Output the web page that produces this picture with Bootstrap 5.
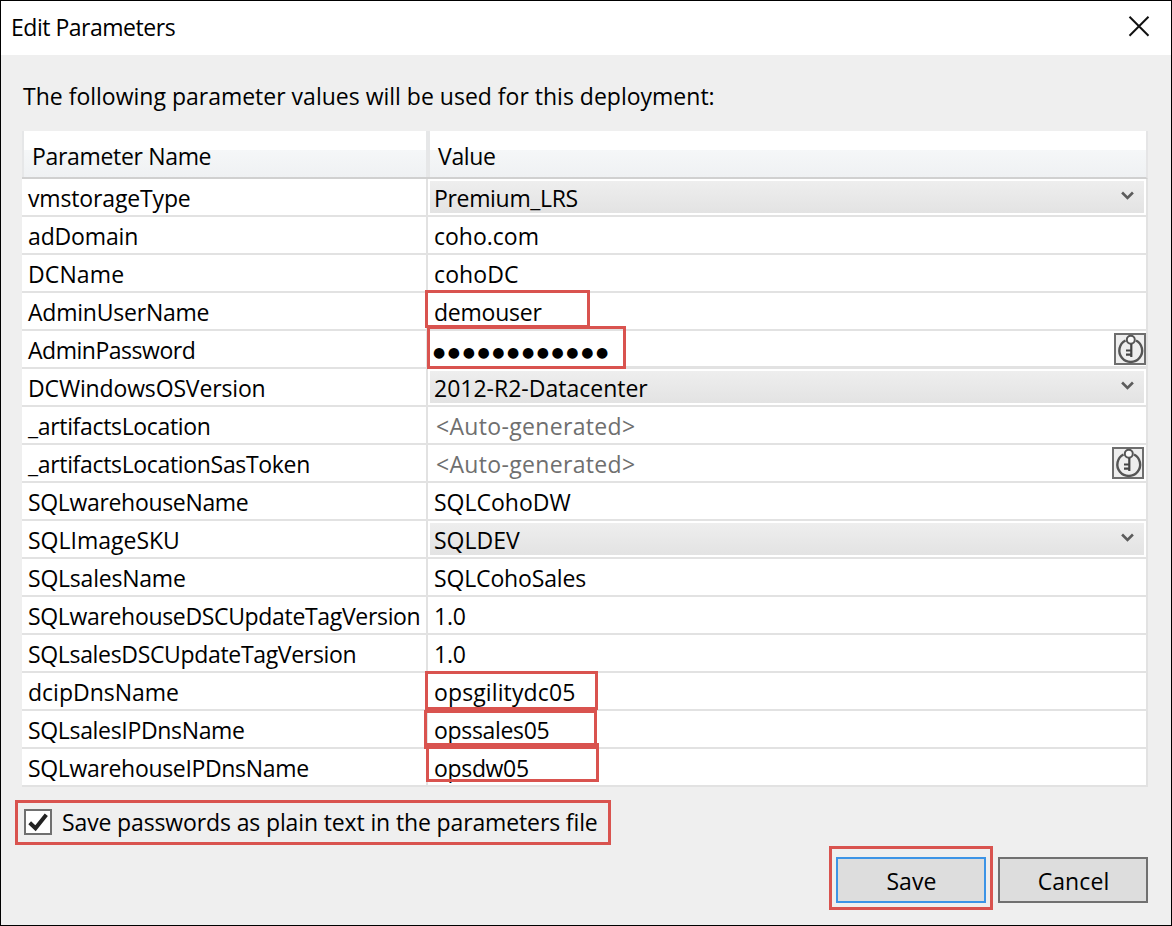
<!DOCTYPE html>
<html lang="en">
<head>
<meta charset="utf-8">
<title>Edit Parameters</title>
<link href="https://cdn.jsdelivr.net/npm/bootstrap@5.3.0/dist/css/bootstrap.min.css" rel="stylesheet">
<style>
body{font-family:"Open Sans","Noto Sans",sans-serif;font-size:23px;line-height:36px;color:#000;background:#efefef;overflow:hidden}
.dialog-win{width:1172px;height:926px;border:1px solid #000;background:#efefef}
.title-bar{height:54px;padding:0 21px 2px 10px}
.t0{letter-spacing:0}.t1{letter-spacing:-.15px}.t2{letter-spacing:-.22px}.t3{letter-spacing:-.33px}.t4{letter-spacing:-.48px}
.w1{letter-spacing:.12px}.w3{letter-spacing:.33px}
.intro{padding:23px 0 0 22px;height:76px}
.param-grid{width:1126px;margin-left:21px}
.grid-head{height:48px;background:linear-gradient(#fff 0 19px,#f5f7f8 19px,#eff1f3 100%);border-bottom:2px solid #d0d0d0;border-right:2px solid #e5e5e6;line-height:44px;padding-top:3px}
.head-name{width:404px;padding-left:8px;border-left:2px solid #e6e7e8;margin-top:-3px;padding-top:3px}
.head-value{border-left:4px solid #e6e7e8;margin-top:-3px;padding:3px 0 0 8px}
.grid-row{height:38px;background:#fff;border-bottom:2px solid #e2e2e2;border-right:2px solid #e2e2e2}
.cell-name{width:406px;padding:1px 0 0 6px;border-right:2px solid #e2e2e2;height:36px}
.cell-value{height:36px;padding:1px 0 0 6px}
.cell-secret{box-shadow:inset 0 -1px #e2e2e2}
.pick{margin:1px 0 0 -4px;padding:0 10px 0 4px;height:32px;line-height:34px;background:linear-gradient(#eee,#e3e3e3);width:714px}
.pick svg{margin-top:10px}
.auto{color:#6f6f6f;padding-left:2px}
.dots{font-family:"DejaVu Sans",sans-serif;font-size:14px;letter-spacing:2.6px;position:relative;top:-2px;left:-1px}
.callout{position:absolute;border:3px solid #d9534f;pointer-events:none}
.key-btn{width:32px;height:32px;position:absolute;top:2px}
.save-opt{width:596px;height:45px;margin:13px 0 0 14px;border:3px solid #d9534f;padding:0 6px 1px;letter-spacing:-.13px}
.box{width:28px;height:26px;border:2px solid #707070;background:#fff;margin-right:10px}
.actions{margin:1px 23px 0 0;gap:5px}
.ring{border:3px solid #d9534f;padding:8px 4px 4px}
.win-btn{width:150px;height:46px;border:2px solid #707070;border-radius:0;background:#ddd;font-size:23px;line-height:36px;color:#000;padding:1px 0 0 1px;letter-spacing:.1px}
.win-btn.is-default{border-color:#3d94e6}
</style>
<script src="https://cdn.jsdelivr.net/npm/bootstrap@5.3.0/dist/js/bootstrap.bundle.min.js"></script>
</head>
<body>
<svg width="0" height="0" class="position-absolute">
<symbol id="key" viewBox="0 0 32 32"><rect x="1" y="1" width="30" height="30" fill="#eee" stroke="#6e6e6e" stroke-width="2"/><path d="M11.5 7.5A11.4 11.4 0 1 0 22 7.5" fill="none" stroke="#555" stroke-width="2.4"/><circle cx="16.8" cy="6.8" r="4" fill="#fafafa" stroke="#555" stroke-width="2"/><path d="M17.3 11v13M12 17.5h5M12 21.7h5" fill="none" stroke="#444" stroke-width="2.2"/></symbol>
<symbol id="chev" viewBox="0 0 12 9"><path d="M1 1.3l5 5 5-5" fill="none" stroke="#5c5c5c" stroke-width="2.4"/></symbol>
</svg>
<main class="dialog-win">
<header class="title-bar bg-white d-flex justify-content-between align-items-center"><span class="t4">Edit Parameters</span>
<svg width="22" height="22" viewBox="0 0 22 22"><path d="M1.5 .7l19 19M20.5 .7l-19 19" stroke="#111" stroke-width="2" fill="none"/></svg></header>
<p class="intro mb-0">The following parameter values will be used for this deployment:</p>
<section class="param-grid">
<div class="grid-head d-flex"><div class="head-name t3">Parameter Name</div><div class="head-value t3 flex-fill">Value</div></div>
<div class="grid-row d-flex"><div class="cell-name t1">vmstorageType</div><div class="cell-value flex-fill"><div class="pick t3 d-flex justify-content-between"><span>Premium_LRS</span><svg width="13" height="10"><use href="#chev" width="13" height="10"/></svg></div></div></div>
<div class="grid-row d-flex"><div class="cell-name t1">adDomain</div><div class="cell-value">coho.com</div></div>
<div class="grid-row d-flex"><div class="cell-name w1">DCName</div><div class="cell-value w1">cohoDC</div></div>
<div class="grid-row d-flex"><div class="cell-name t2">AdminUserName</div><div class="cell-value position-relative t2">demouser<i class="callout" style="left:-3px;top:-3px;width:165px;height:38px"></i></div></div>
<div class="grid-row d-flex"><div class="cell-name t4">AdminPassword</div><div class="cell-value cell-secret position-relative flex-fill"><span class="dots">●●●●●●●●●●●●</span><svg class="key-btn end-0"><use href="#key"/></svg><i class="callout" style="left:-1px;top:-5px;width:199px;height:43px"></i></div></div>
<div class="grid-row d-flex"><div class="cell-name t1">DCWindowsOSVersion</div><div class="cell-value flex-fill"><div class="pick d-flex justify-content-between"><span>2012-R2-Datacenter</span><svg width="13" height="10"><use href="#chev" width="13" height="10"/></svg></div></div></div>
<div class="grid-row d-flex"><div class="cell-name t3">_artifactsLocation</div><div class="cell-value w3"><span class="auto">&lt;Auto-generated&gt;</span></div></div>
<div class="grid-row d-flex"><div class="cell-name t3">_artifactsLocationSasToken</div><div class="cell-value position-relative flex-fill w3"><span class="auto">&lt;Auto-generated&gt;</span><svg class="key-btn" style="right:2px"><use href="#key"/></svg></div></div>
<div class="grid-row d-flex"><div class="cell-name t3">SQLwarehouseName</div><div class="cell-value">SQLCohoDW</div></div>
<div class="grid-row d-flex"><div class="cell-name t0">SQLImageSKU</div><div class="cell-value flex-fill"><div class="pick d-flex justify-content-between"><span>SQLDEV</span><svg width="13" height="10"><use href="#chev" width="13" height="10"/></svg></div></div></div>
<div class="grid-row d-flex"><div class="cell-name t2">SQLsalesName</div><div class="cell-value t1">SQLCohoSales</div></div>
<div class="grid-row d-flex"><div class="cell-name t3">SQLwarehouseDSCUpdateTagVersion</div><div class="cell-value t2">1.0</div></div>
<div class="grid-row d-flex"><div class="cell-name t3">SQLsalesDSCUpdateTagVersion</div><div class="cell-value t2">1.0</div></div>
<div class="grid-row d-flex"><div class="cell-name t0">dcipDnsName</div><div class="cell-value position-relative w1">opsgilitydc05<i class="callout" style="left:-3px;top:-2px;width:173px;height:39px"></i></div></div>
<div class="grid-row d-flex"><div class="cell-name t3">SQLsalesIPDnsName</div><div class="cell-value position-relative t3">opssales05<i class="callout" style="left:-4px;top:-1px;width:173px;height:39px"></i></div></div>
<div class="grid-row d-flex"><div class="cell-name t3">SQLwarehouseIPDnsName</div><div class="cell-value position-relative t3">opsdw05<i class="callout" style="left:-2px;top:-6px;width:173px;height:39px"></i></div></div>
</section>
<label class="save-opt d-flex align-items-center"><span class="box d-flex"><svg width="24" height="23" viewBox="0 0 24 23"><path d="M3.7 11.8l5.8 5.4L20.3 3.7" fill="none" stroke="#222" stroke-width="4"/></svg></span><span>Save passwords as plain text in the parameters file</span></label>
<footer class="actions d-flex justify-content-end align-items-start"><div class="ring"><button class="btn win-btn is-default d-block">Save</button></div><button class="btn win-btn" style="margin-top:11px">Cancel</button></footer>
</main>
</body>
</html>
